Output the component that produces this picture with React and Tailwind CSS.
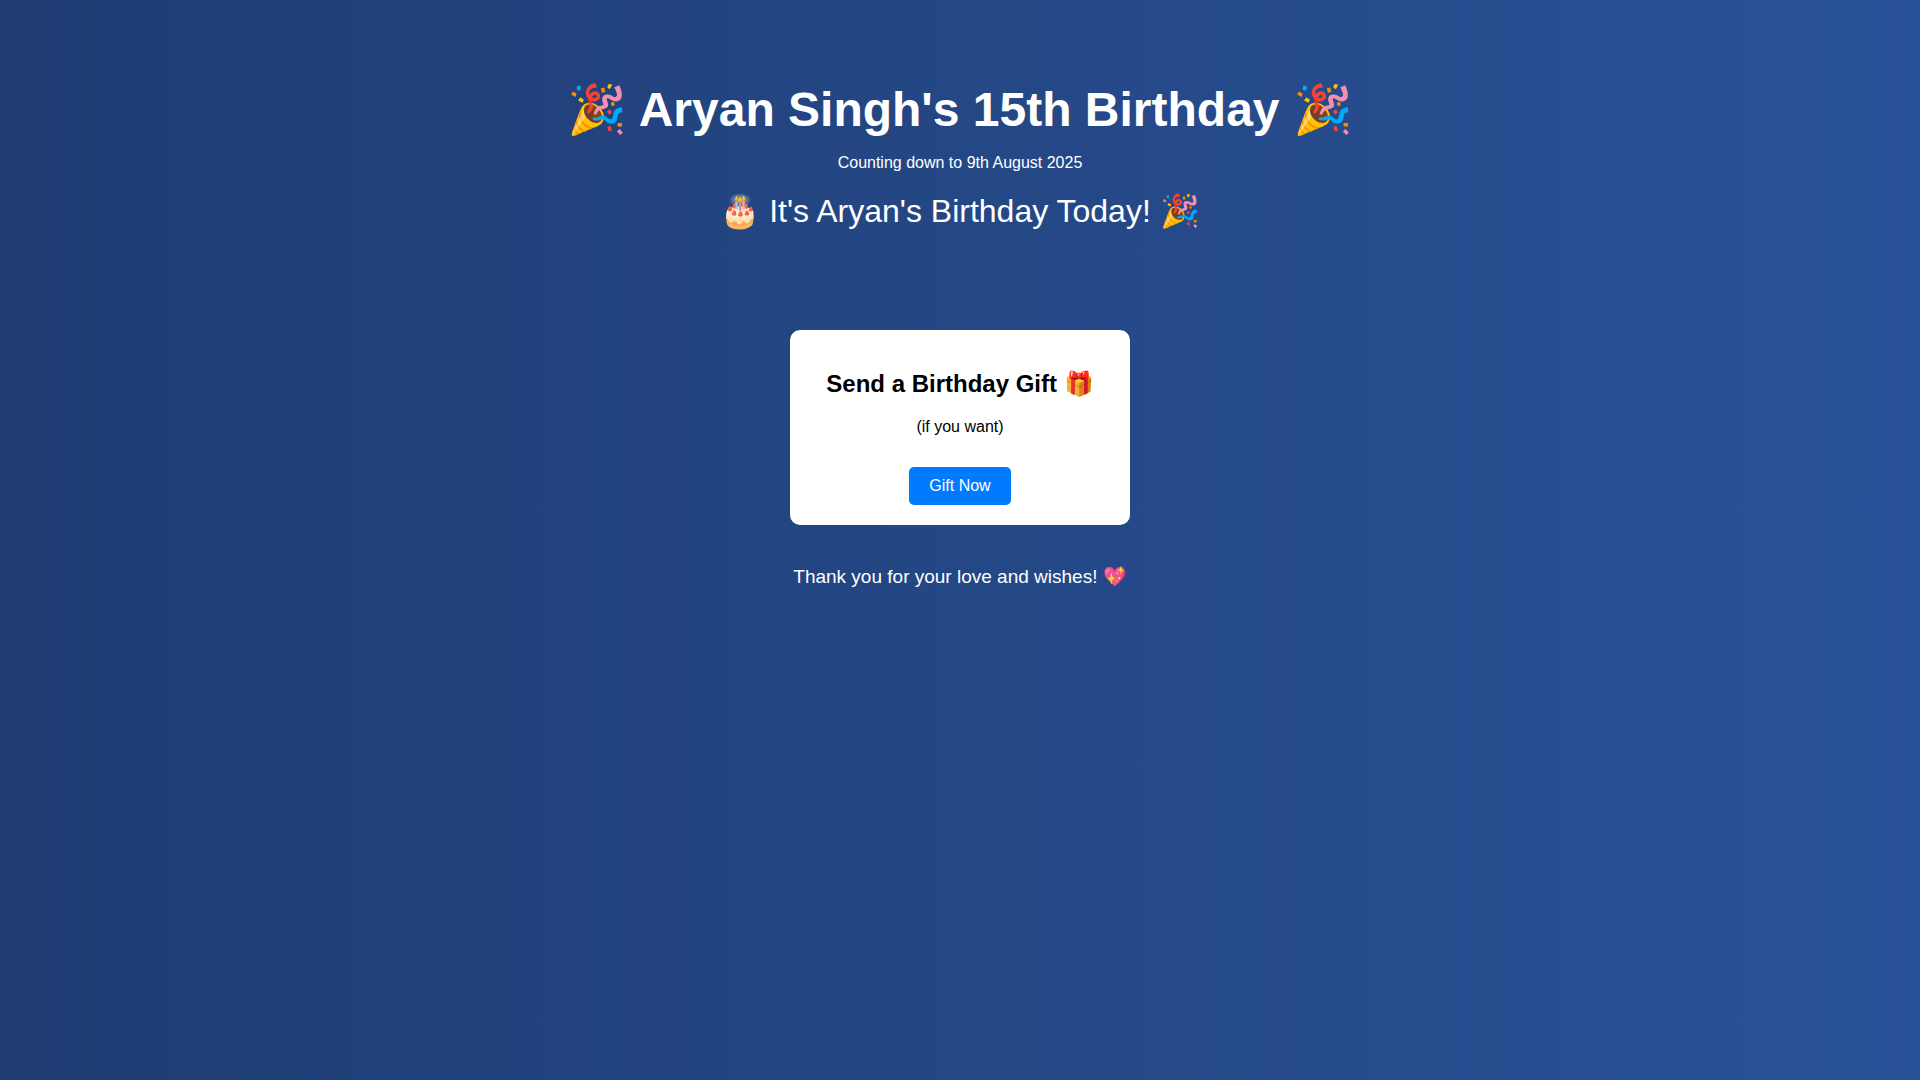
export default function App() {
  return (
    <div className="min-h-screen bg-linear-[to_right,#1e3c72,#2a5298] p-5 text-center font-[Arial,'Liberation_Sans',sans-serif] text-base leading-[normal] text-white">
      <header className="px-5 pt-[61px] pb-15">
        <h1 className="mb-4 text-5xl leading-[normal] font-bold">🎉 Aryan Singh's 15th Birthday 🎉</h1>
        <p>Counting down to 9th August 2025</p>
        <div className="mt-5 text-[32px]">🎂 It's Aryan's Birthday Today! 🎉</div>
      </header>

      <main className="mt-10">
        <section className="mx-auto w-fit rounded-[10px] bg-white px-9 pt-10 pb-5 text-black">
          <h2 className="mb-5 text-2xl leading-[normal] font-bold">Send a Birthday Gift 🎁</h2>
          <p className="mb-[31px]">(if you want)</p>
          <button type="button" className="rounded-[5px] bg-[#007bff] px-5 py-[10px] leading-[18px] text-white">Gift Now</button>
        </section>
      </main>

      <footer className="mt-10 text-[19px]">Thank you for your love and wishes! 💖</footer>
    </div>
  )
}
